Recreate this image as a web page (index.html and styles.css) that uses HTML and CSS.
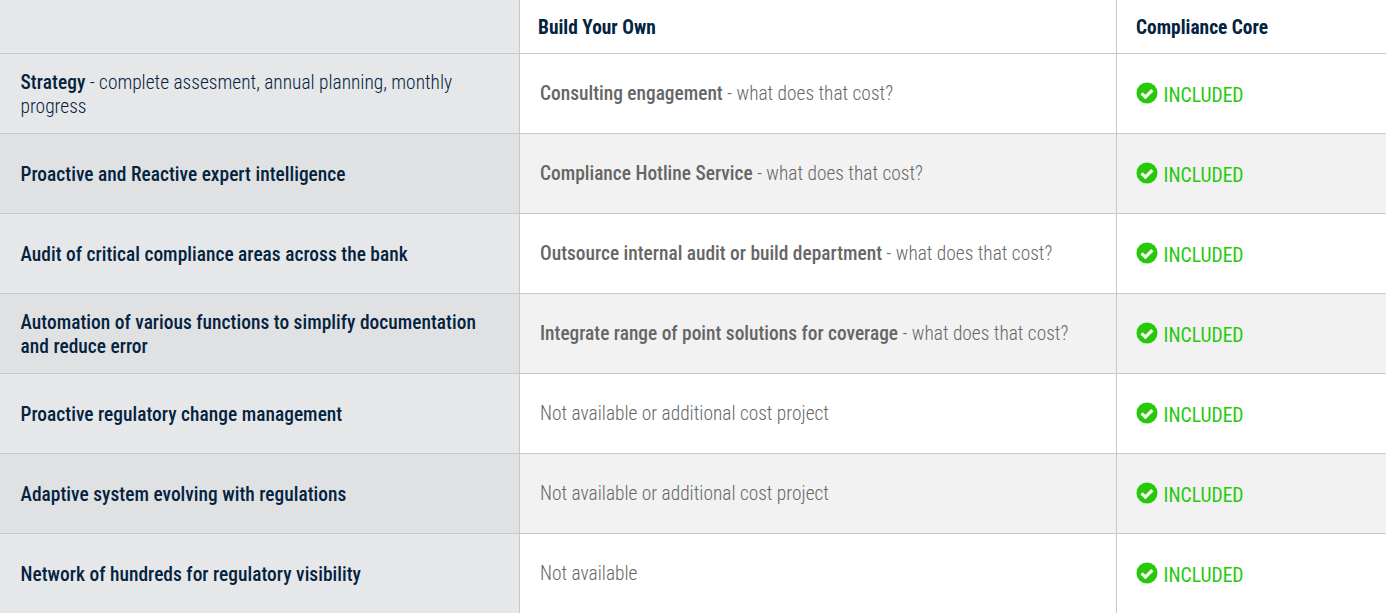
FILE: index.html
```html
<!DOCTYPE html>
<html lang="en">
<head>
<meta charset="utf-8">
<title>Compliance Core comparison</title>
<link rel="stylesheet" href="styles.css">
</head>
<body>
<svg class="defs" width="0" height="0" aria-hidden="true"><defs><symbol id="check" viewBox="0 0 22 22"><circle cx="11" cy="11" r="10.5" fill="#28c80a"/><path d="M5.6 11.3l3.8 3.8 7-7" fill="none" stroke="#fff" stroke-width="3.2"/></symbol></defs></svg>
<main class="table">
  <div class="row head">
    <div class="cell a"></div>
    <div class="cell b"><strong>Build Your Own</strong></div>
    <div class="cell c"><strong>Compliance Core</strong></div>
  </div>
  <div class="row">
    <div class="cell a"><span><b>Strategy</b> - complete assesment, annual planning, monthly progress</span></div>
    <div class="cell b"><span><b>Consulting engagement</b> - what does that cost?</span></div>
    <div class="cell c"><svg class="ico"><use href="#check"/></svg><span class="inc">INCLUDED</span></div>
  </div>
  <div class="row alt">
    <div class="cell a"><b>Proactive and Reactive expert intelligence</b></div>
    <div class="cell b"><span><b>Compliance Hotline Service</b> - what does that cost?</span></div>
    <div class="cell c"><svg class="ico"><use href="#check"/></svg><span class="inc">INCLUDED</span></div>
  </div>
  <div class="row">
    <div class="cell a"><b>Audit of critical compliance areas across the bank</b></div>
    <div class="cell b"><span><b>Outsource internal audit or build department</b> - what does that cost?</span></div>
    <div class="cell c"><svg class="ico"><use href="#check"/></svg><span class="inc">INCLUDED</span></div>
  </div>
  <div class="row alt">
    <div class="cell a"><b>Automation of various functions to simplify documentation and reduce error</b></div>
    <div class="cell b"><span><b>Integrate range of point solutions for coverage</b> - what does that cost?</span></div>
    <div class="cell c"><svg class="ico"><use href="#check"/></svg><span class="inc">INCLUDED</span></div>
  </div>
  <div class="row">
    <div class="cell a"><b>Proactive regulatory change management</b></div>
    <div class="cell b"><span>Not available or additional cost project</span></div>
    <div class="cell c"><svg class="ico"><use href="#check"/></svg><span class="inc">INCLUDED</span></div>
  </div>
  <div class="row alt">
    <div class="cell a"><b>Adaptive system evolving with regulations</b></div>
    <div class="cell b"><span>Not available or additional cost project</span></div>
    <div class="cell c"><svg class="ico"><use href="#check"/></svg><span class="inc">INCLUDED</span></div>
  </div>
  <div class="row">
    <div class="cell a"><b>Network of hundreds for regulatory visibility</b></div>
    <div class="cell b"><span>Not available</span></div>
    <div class="cell c"><svg class="ico"><use href="#check"/></svg><span class="inc">INCLUDED</span></div>
  </div>
</main>
</body>
</html>
```
FILE: styles.css
```css
html, body { margin: 0; padding: 0; background: #fff; overflow: hidden; }
body { font-family: Roboto, "Liberation Sans", sans-serif; font-size: 19.4px; line-height: 24px; font-weight: 300; font-stretch: 75%; }
.defs { position: absolute; }
.table { width: 1386px; }
.row { display: grid; grid-template-columns: 520px 597px 269px; height: 80px; box-sizing: border-box; border-bottom: 1px solid #c6c8ca; }
.row.head { height: 54px; }
.cell { display: flex; align-items: center; box-sizing: border-box; }
.cell b { font-weight: 500; }
.a { background: #e6e7e9; color: #04233f; padding: 2px 40px 0 20.5px; border-right: 1px solid #c6c8ca; }
.a b { letter-spacing: 0.03px; }
.a span b { letter-spacing: 0.07px; }
.alt .a { background: #e0e1e3; }
.b { color: #666; padding: 0 20px; border-right: 1px solid #c6c8ca; }
.alt .b, .alt .c { background: #f2f2f2; }
.c { padding: 0 19px; gap: 5.5px; }
.head .b, .head .c { color: #04233f; padding-top: 2px; }
.head .b { padding-left: 18px; }
.head strong { font-weight: 700; }
.ico { width: 22px; height: 22px; flex: none; position: relative; top: -1px; }
.inc { color: #28c80a; font-size: 19.6px; font-weight: 400; padding-top: 5px; }
```
